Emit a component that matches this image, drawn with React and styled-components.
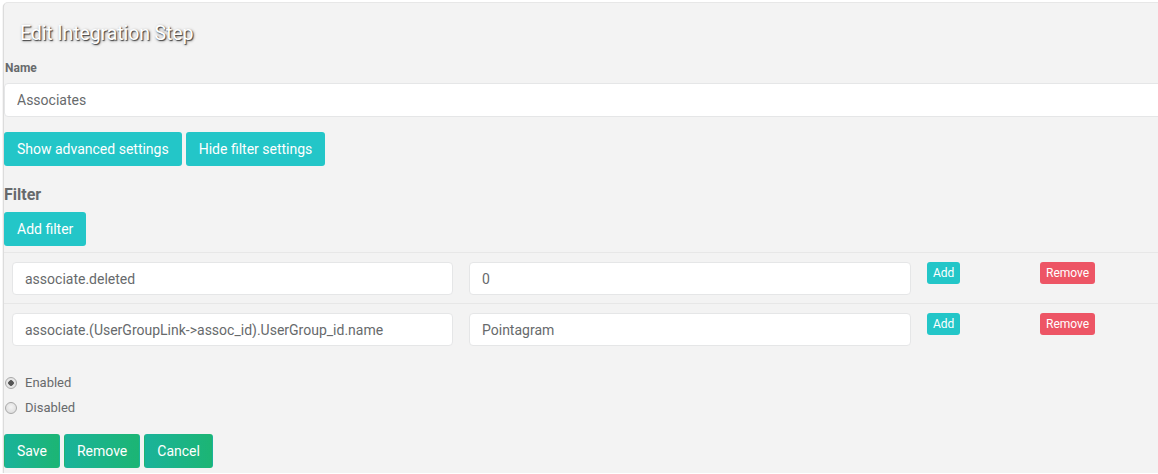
import React from 'react';
import styled, { createGlobalStyle } from 'styled-components';

const GlobalStyle = createGlobalStyle`
  html, body { margin: 0; padding: 0; background: #fff; overflow: hidden; }
  body { font-family: Roboto, "Liberation Sans", Arial, sans-serif; color: #676a6c; }
  * { box-sizing: border-box; }
`

const Panel = styled.div`
  margin: 2px 0 0 3px;
  width: calc(100% + 20px);
  height: 471px;
  background: #f3f3f3;
  border-top: 1px solid #e7e7e7;
  border-left: 1px solid #dcdcdc;
  border-top-left-radius: 5px;
  box-shadow: 0 1px 1px #9a9a9a;
`

const Title = styled.h2`
  margin: 0;
  padding: 19px 0 0 16px;
  height: 58px;
  font-size: 19.5px;
  font-weight: 400;
  line-height: 24px;
  color: #fff;
  text-shadow: 1px 1px 1px #444, 1px 1px 3px #888;
  letter-spacing: -0.1px;
`

const Label = styled.label`
  display: block;
  padding-left: 1px;
  font-size: 12px;
  font-weight: 700;
  color: #676a6c;
  line-height: 16px;
  margin: -1px 0 7px;
`

const TextInput = styled.input`
  display: block;
  width: 100%;
  height: ${p => p.$h || 34}px;
  padding: 0 12px;
  background: #fff;
  border: 1px solid #e5e6e7;
  border-radius: 4px;
  font-family: inherit;
  font-size: 14px;
  color: #676a6c;
  outline: none;
`

const ButtonRow = styled.div`
  display: flex;
  gap: ${p => p.$gap || 4}px;
  margin-top: ${p => p.$top || 0}px;
`

const Button = styled.button`
  height: ${p => p.$small ? 22 : 34}px;
  padding: ${p => p.$small ? '0 5px' : '0 12px'};
  border: 1px solid transparent;
  border-radius: 3px;
  font-family: inherit;
  font-size: ${p => p.$small ? 12 : 14}px;
  color: #fff;
  cursor: pointer;
  background: ${p =>
    p.$kind === 'danger' ? '#ed5565'
    : p.$kind === 'success' ? 'linear-gradient(to right, #1ab39a, #1cb574)'
    : '#23c6c8'};
`

const Heading = styled.h3`
  margin: 19px 0 7px;
  font-size: 16px;
  font-weight: 700;
  line-height: 20px;
  color: #676a6c;
`

const FilterTable = styled.div`
  margin-top: 6px;
`

const FilterRow = styled.div`
  display: grid;
  grid-template-columns: 457px 458px 113px 1fr;
  align-items: start;
  border-top: 1px solid #e7e7e7;
  padding: 9px 0 8px 0;
`

const Cell = styled.div`
  padding: 0 8px;
`

const RadioGroup = styled.div`
  margin-top: 20px;
  display: flex;
  flex-direction: column;
  gap: 7px;
`

const RadioLabel = styled.label`
  display: flex;
  align-items: center;
  gap: 8px;
  font-size: 13px;
  color: #676a6c;
  line-height: 18px;
`

const Radio = styled.input.attrs({ type: 'radio' })`
  appearance: none;
  margin: 0 0 0 1px;
  width: 12px;
  height: 12px;
  border-radius: 50%;
  border: 1px solid #a9a9a9;
  background: radial-gradient(circle at 50% 40%, #f4f4f4, #d8d8d8);
  position: relative;
  &:checked {
    background: radial-gradient(circle, #555 0 2.5px, #e6e6e6 3px);
  }
`

const filters = [
  { field: 'associate.deleted', value: '0' },
  { field: 'associate.(UserGroupLink->assoc_id).UserGroup_id.name', value: 'Pointagram' },
]

export default function App() {
  return (
    <>
      <GlobalStyle />
      <Panel>
        <Title>Edit Integration Step</Title>
        <Label>Name</Label>
        <TextInput defaultValue="Associates" />
        <ButtonRow $top={15}>
          <Button>Show advanced settings</Button>
          <Button>Hide filter settings</Button>
        </ButtonRow>
        <Heading>Filter</Heading>
        <Button>Add filter</Button>
        <FilterTable>
          {filters.map((f, i) => (
            <FilterRow key={i}>
              <Cell><TextInput $h={33} defaultValue={f.field} /></Cell>
              <Cell><TextInput $h={33} defaultValue={f.value} /></Cell>
              <Cell><Button $small>Add</Button></Cell>
              <Cell><Button $small $kind="danger">Remove</Button></Cell>
            </FilterRow>
          ))}
        </FilterTable>
        <RadioGroup>
          <RadioLabel><Radio name="state" defaultChecked />Enabled</RadioLabel>
          <RadioLabel><Radio name="state" />Disabled</RadioLabel>
        </RadioGroup>
        <ButtonRow $top={17}>
          <Button $kind="success">Save</Button>
          <Button $kind="success">Remove</Button>
          <Button $kind="success">Cancel</Button>
        </ButtonRow>
      </Panel>
    </>
  );
}
